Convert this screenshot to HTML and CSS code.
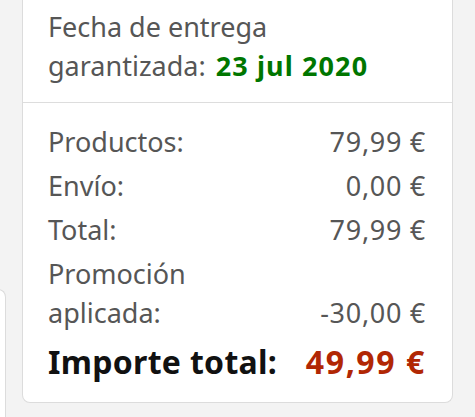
FILE: index.html
```html
<!DOCTYPE html>
<html lang="es">
<head>
<meta charset="utf-8">
<link rel="stylesheet" href="styles.css">
</head>
<body>
<div class="carousel">
  <div class="card side-card"></div>
  <div class="card summary">
    <div class="delivery">
      Fecha de entrega garantizada: <span class="date">23 jul 2020</span>
    </div>
    <div class="totals">
      <div class="row"><span class="label">Productos:</span><span class="value">79,99 €</span></div>
      <div class="row"><span class="label">Envío:</span><span class="value">0,00 €</span></div>
      <div class="row"><span class="label">Total:</span><span class="value">79,99 €</span></div>
      <div class="row promo"><span class="label">Promoción<br>aplicada:</span><span class="value">-30,00 €</span></div>
      <div class="row grand"><span class="label">Importe total:</span><span class="value">49,99 €</span></div>
    </div>
  </div>
</div>
</body>
</html>
```
FILE: styles.css
```css
html, body {
  margin: 0;
  padding: 0;
  background: #f3f3f3;
  font-family: "Noto Sans", "DejaVu Sans", sans-serif;
  overflow: hidden;
}
.carousel {
  display: flex;
  gap: 16px;
  align-items: flex-start;
  width: 475px;
  height: 417px;
  overflow: hidden;
}
.card {
  background: #fff;
  border: 1px solid #dcdcdc;
  border-radius: 8px;
  box-sizing: border-box;
  flex: none;
}
.side-card {
  width: 300px;
  height: 128px;
  margin-left: -294px;
  margin-top: 289px;
  border-bottom: none;
  border-bottom-left-radius: 0;
  border-bottom-right-radius: 0;
}
.summary {
  width: 431px;
  border-top: none;
  border-top-left-radius: 0;
  border-top-right-radius: 0;
}
.delivery {
  padding: 7px 26px 17px 25px;
  font-size: 27px;
  line-height: 39px;
  color: #565656;
  border-bottom: 1px solid #ddd;
}
.date {
  color: #007600;
  font-weight: 700;
  letter-spacing: 1.1px;
  margin-left: 3px;
}
.totals {
  padding: 17px 26px 12px 25px;
  color: #565656;
  font-size: 27px;
}
.row {
  display: flex;
  justify-content: space-between;
  align-items: flex-end;
  line-height: 44px;
}
.value {
  letter-spacing: 0.7px;
}
.promo {
  line-height: 39px;
  margin-top: 2px;
}
.grand {
  color: #111;
  font-weight: 700;
  font-size: 32px;
  line-height: 56px;
  margin-top: 2px;
}
.grand .label {
  letter-spacing: 0.3px;
}
.grand .value {
  color: #b12704;
  letter-spacing: 1.6px;
}
```
